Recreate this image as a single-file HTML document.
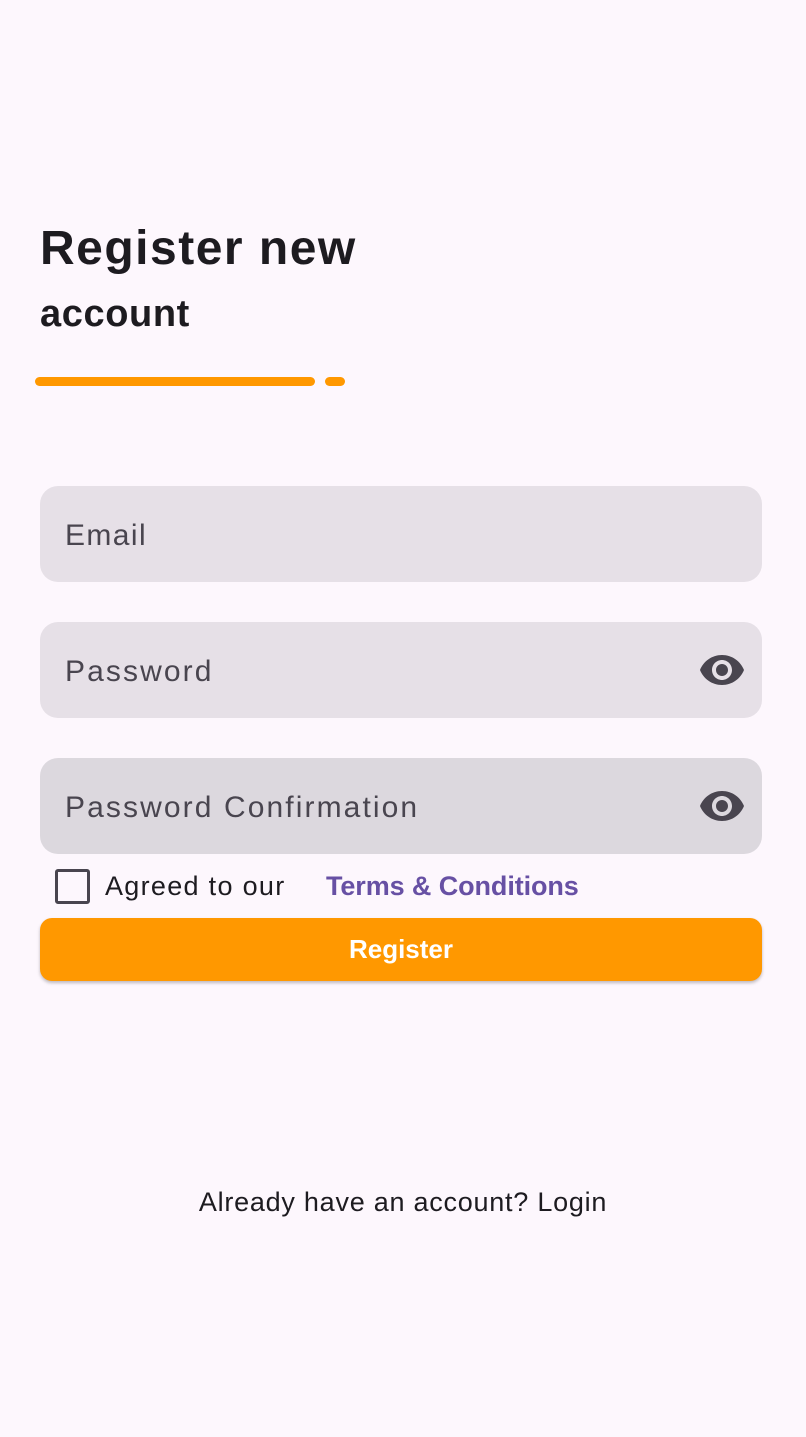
<!DOCTYPE html>
<html><head><meta charset="utf-8"><style>
html,body{margin:0;padding:0}
body{width:806px;height:1437px;background:#fdf7fd;font-family:"Liberation Sans","DejaVu Sans",sans-serif;position:relative;overflow:hidden;color:#1d1b20}
.a{position:absolute}
.h1{left:40px;top:221px;font-size:48px;font-weight:bold;letter-spacing:1.5px}
.h2{left:40px;top:293px;font-size:38px;font-weight:bold;letter-spacing:0.6px}
.bar{background:#ff9800;height:9px;border-radius:5px;top:377px}
.f{left:40px;width:722px;height:96px;border-radius:18px;background:#e6e0e7}
.f span{position:absolute;left:25px;top:33px;font-size:30px;color:#49454f;letter-spacing:2.1px}
.f svg{position:absolute;left:658px;top:24px}
</style></head><body>
<div class="a h1">Register new</div>
<div class="a h2">account</div>
<div class="a bar" style="left:35px;width:280px"></div>
<div class="a bar" style="left:325px;width:20px"></div>
<div class="a f" style="top:486px"><span style="letter-spacing:1.4px">Email</span></div>
<div class="a f" style="top:622px"><span>Password</span>
<svg width="48" height="48" viewBox="0 0 24 24"><path fill="#49454f" d="M12 4.5C7 4.5 2.73 7.61 1 12c1.730 4.39 6 7.5 11 7.5s9.27-3.11 11-7.5c-1.73-4.39-6-7.5-11-7.5zM12 17c-2.76 0-5-2.24-5-5s2.24-5 5-5 5 2.24 5 5-2.24 5-5 5zm0-8c-1.66 0-3 1.34-3 3s1.34 3 3 3 3-1.34 3-3-1.34-3-3-3z"/></svg></div>
<div class="a f" style="top:758px;background:#dcd8de"><span>Password Confirmation</span>
<svg width="48" height="48" viewBox="0 0 24 24"><path fill="#49454f" d="M12 4.5C7 4.5 2.73 7.61 1 12c1.73 4.39 6 7.5 11 7.5s9.27-3.11 11-7.5c-1.73-4.39-6-7.5-11-7.5zM12 17c-2.76 0-5-2.24-5-5s2.24-5 5-5 5 2.24 5 5-2.24 5-5 5zm0-8c-1.66 0-3 1.34-3 3s1.34 3 3 3 3-1.34 3-3-1.34-3-3-3z"/></svg></div>
<div class="a" style="left:55px;top:869px;width:29px;height:29px;border:3px solid #49454f;border-radius:3px"></div>
<div class="a" style="left:105px;top:871px;font-size:27px;color:#1d1b20;letter-spacing:1.3px">Agreed to our</div>
<div class="a" style="left:326px;top:871px;font-size:27px;color:#6750a4;font-weight:bold;letter-spacing:-0.1px">Terms &amp; Conditions</div>
<div class="a" style="left:40px;top:918px;width:722px;height:63px;border-radius:12px;background:#ff9800;box-shadow:0 2px 3px rgba(0,0,0,0.25);color:#fff;font-weight:bold;font-size:26px;text-align:center;line-height:63px">Register</div>
<div class="a" style="left:0;width:806px;text-align:center;top:1187px;font-size:27px;color:#1d1b20;letter-spacing:0.75px">Already have an account? Login</div>
</body></html>
